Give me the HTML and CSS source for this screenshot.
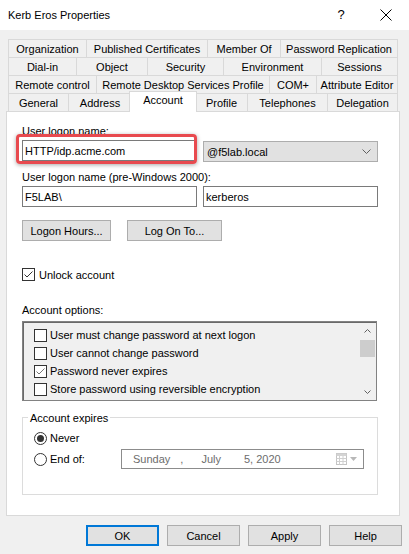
FILE: index.html
```html
<!DOCTYPE html>
<html>
<head>
<meta charset="utf-8">
<title>Kerb Eros Properties</title>
<link rel="stylesheet" href="styles.css">
</head>
<body>
<div class="window">
  <div class="titlebar">
    <span class="title">Kerb Eros Properties</span>
    <span class="help">?</span>
    <span class="close"><svg width="12" height="12" viewBox="0 0 12 12"><path d="M0.5 0.5 L11.5 11.5 M11.5 0.5 L0.5 11.5" stroke="#000" stroke-width="1" fill="none"/></svg></span>
  </div>

  <div class="tabs">
    <div class="tabrow r1">
      <div class="tab">Organization</div>
      <div class="tab">Published Certificates</div>
      <div class="tab">Member Of</div>
      <div class="tab">Password Replication</div>
    </div>
    <div class="tabrow r2">
      <div class="tab">Dial-in</div>
      <div class="tab">Object</div>
      <div class="tab">Security</div>
      <div class="tab">Environment</div>
      <div class="tab">Sessions</div>
    </div>
    <div class="tabrow r3">
      <div class="tab">Remote control</div>
      <div class="tab">Remote Desktop Services Profile</div>
      <div class="tab">COM+</div>
      <div class="tab">Attribute Editor</div>
    </div>
    <div class="tabrow r4">
      <div class="tab">General</div>
      <div class="tab">Address</div>
      <div class="tab sel">Account</div>
      <div class="tab">Profile</div>
      <div class="tab">Telephones</div>
      <div class="tab">Delegation</div>
    </div>
  </div>

  <div class="panel">
    <div class="label">User logon name:</div>
    <div class="row1">
      <div class="hl-wrap">
        <div class="input w173">HTTP/idp.acme.com</div>
        <div class="highlight"></div>
      </div>
      <div class="combo">
        <span>@f5lab.local</span>
        <svg width="9" height="5" viewBox="0 0 9 5"><polyline points="0.5,0.5 4.5,4.5 8.5,0.5" fill="none" stroke="#606060" stroke-width="1"/></svg>
      </div>
    </div>
    <div class="label label2">User logon name (pre-Windows 2000):</div>
    <div class="row2">
      <div class="input w175">F5LAB\</div>
      <div class="input w175">kerberos</div>
    </div>
    <div class="btnrow">
      <div class="btn w89">Logon Hours...</div>
      <div class="btn w95">Log On To...</div>
    </div>
    <div class="check-row unlock">
      <span class="cbox"><svg width="11" height="11" viewBox="0 0 11 11"><polyline points="1.5,5.5 4,8 9.5,2.5" fill="none" stroke="#333" stroke-width="1"/></svg></span>
      <span>Unlock account</span>
    </div>
    <div class="label label3">Account options:</div>
    <div class="listbox">
      <div class="items">
        <div class="check-row item"><span class="cbox"></span><span>User must change password at next logon</span></div>
        <div class="check-row item"><span class="cbox"></span><span>User cannot change password</span></div>
        <div class="check-row item"><span class="cbox"><svg width="11" height="11" viewBox="0 0 11 11"><polyline points="1.5,5.5 4,8 9.5,2.5" fill="none" stroke="#777" stroke-width="1"/></svg></span><span>Password never expires</span></div>
        <div class="check-row item"><span class="cbox"></span><span>Store password using reversible encryption</span></div>
      </div>
      <div class="scrollbar">
        <div class="arrow"><svg width="7" height="4" viewBox="0 0 7 4"><polyline points="0.5,3.5 3.5,0.5 6.5,3.5" fill="none" stroke="#606060" stroke-width="1"/></svg></div>
        <div class="thumb"></div>
        <div class="arrow down"><svg width="7" height="4" viewBox="0 0 7 4"><polyline points="0.5,0.5 3.5,3.5 6.5,0.5" fill="none" stroke="#606060" stroke-width="1"/></svg></div>
      </div>
    </div>

    <div class="group">
      <div class="legend">Account expires</div>
      <div class="radio-row first">
        <span class="radio on"><span class="dot"></span></span>
        <span class="rlabel">Never</span>
      </div>
      <div class="radio-row second">
        <span class="radio"></span>
        <span class="rlabel wide">End of:</span>
        <div class="datepick">
          <span class="d-day">Sunday</span>
          <span class="d-comma">,</span>
          <span class="d-month">July</span>
          <span class="d-date">5, 2020</span>
          <span class="d-icon">
            <svg width="11" height="12" viewBox="0 0 11 12"><rect x="0.5" y="0.5" width="10" height="11" fill="#fff" stroke="#c4c4c4"/><rect x="0.5" y="0.5" width="10" height="2.5" fill="#d4d4d4"/><path d="M0.5 5.5 H10.5 M0.5 8.5 H10.5 M3.5 3 V11.5 M7 3 V11.5" stroke="#d0d0d0" stroke-width="1"/></svg>
            <svg width="7" height="4" viewBox="0 0 7 4"><polygon points="0,0 7,0 3.5,4" fill="#b8b8b8"/></svg>
          </span>
        </div>
      </div>
    </div>
  </div>

  <div class="footer">
    <div class="btn w73 default">OK</div>
    <div class="btn w73">Cancel</div>
    <div class="btn w73">Apply</div>
    <div class="btn w73">Help</div>
  </div>
</div>
</body>
</html>
```

FILE: styles.css
```css
html, body {
  margin: 0;
  padding: 0;
}
body {
  width: 409px;
  height: 554px;
  overflow: hidden;
  background: #f0f0f0;
  font-family: "Liberation Sans", Arial, sans-serif;
  font-size: 11px;
  color: #000;
}
.window {
  width: 409px;
  height: 554px;
  background: #f0f0f0;
}

/* Title bar */
.titlebar {
  height: 30px;
  background: #fff;
  display: flex;
  align-items: center;
  padding-left: 8px;
  padding-right: 13px;
}
.title {
  line-height: 14px;
}
.help {
  margin-left: auto;
  width: 20px;
  text-align: center;
  font-size: 13px;
  line-height: 14px;
}
.close {
  margin-left: 25px;
  width: 20px;
  height: 12px;
  display: flex;
  justify-content: center;
}

/* Tabs */
.tabs {
  padding-top: 9px;
  margin-left: 8px;
  width: 390px;
}
.tabrow {
  display: grid;
  height: 18px;
}
.r1 { grid-template-columns: 78px 121px 73px 118px; }
.r2 { grid-template-columns: 68px 71px 76px 98px 77px; }
.r3 { grid-template-columns: 88px 173px 47px 82px; }
.r4 { grid-template-columns: 60px 63px 64px 52px 80px 71px; }
.tab {
  border-top: 1px solid #d9d9d9;
  border-left: 1px solid #d9d9d9;
  background: #f0f0f0;
  display: flex;
  align-items: center;
  justify-content: center;
  line-height: 14px;
  white-space: nowrap;
}
.tab:last-child {
  border-right: 1px solid #d9d9d9;
}
.tab.sel {
  position: relative;
  z-index: 1;
  background: #fff;
  margin: -2px -2px -1px -2px;
  border: 1px solid #d9d9d9;
  border-bottom: none;
  align-items: flex-start;
  padding-top: 1px;
}

/* Panel */
.panel {
  margin-left: 6px;
  width: 394px;
  height: 405px;
  box-sizing: border-box;
  border: 1px solid #d9d9d9;
  background: #fff;
  padding: 12px 0 0 15px;
}
.label {
  line-height: 14px;
  height: 14px;
  white-space: nowrap;
}
.label2 { margin-top: 8px; }
.label3 { margin-top: 21px; }

.row1 {
  display: flex;
  align-items: flex-start;
  margin-top: 2px;
  height: 22px;
}
.hl-wrap {
  position: relative;
  width: 173px;
  height: 21px;
}
.input {
  box-sizing: border-box;
  height: 21px;
  border: 1px solid #7a7a7a;
  background: #fff;
  padding-left: 2px;
  display: flex;
  align-items: center;
  white-space: nowrap;
}
.w173 { width: 173px; }
.w175 { width: 175px; }
.highlight {
  position: absolute;
  left: -6px;
  top: -6px;
  right: -2px;
  bottom: -3px;
  border: 3px solid #e84a4f;
  border-radius: 4px;
  box-shadow: 0 1px 4px rgba(0, 0, 0, 0.35);
  pointer-events: none;
}
.combo {
  box-sizing: border-box;
  margin-left: 8px;
  margin-top: 1px;
  width: 175px;
  height: 21px;
  border: 1px solid #adadad;
  background: #e1e1e1;
  padding: 0 6px 0 3px;
  display: flex;
  align-items: center;
  justify-content: space-between;
}

.row2 {
  display: flex;
  gap: 6px;
  margin-top: 2px;
}

.btnrow {
  display: flex;
  gap: 16px;
  margin-top: 13px;
}
.btn {
  box-sizing: border-box;
  height: 21px;
  border: 1px solid #adadad;
  background: #e1e1e1;
  display: flex;
  align-items: center;
  justify-content: center;
  white-space: nowrap;
}
.w89 { width: 89px; }
.w95 { width: 95px; }
.w73 { width: 73px; }
.btn.default {
  border: 2px solid #0078d7;
}

.check-row {
  display: flex;
  align-items: center;
  white-space: nowrap;
}
.cbox {
  box-sizing: border-box;
  width: 13px;
  height: 13px;
  border: 1px solid #333;
  background: #fff;
  display: flex;
  flex: none;
}
.unlock {
  margin-top: 26px;
  height: 15px;
  gap: 4px;
}

/* Listbox */
.listbox {
  box-sizing: border-box;
  margin-top: 4px;
  width: 355px;
  height: 80px;
  border: 1px solid #828282;
  box-shadow: inset 1px 1px 0 #696969;
  background: #f0f0f0;
  display: flex;
}
.items {
  flex: 1;
  padding: 4px 0 0 11px;
}
.item {
  height: 18px;
  gap: 3px;
}
.scrollbar {
  width: 17px;
  display: flex;
  flex-direction: column;
}
.arrow {
  height: 17px;
  display: flex;
  align-items: center;
  justify-content: center;
}
.arrow.down {
  margin-top: auto;
}
.thumb {
  margin: 1px 1px 0 1px;
  height: 17px;
  background: #cdcdcd;
}

/* Group box */
.group {
  box-sizing: border-box;
  margin-top: 16px;
  width: 356px;
  border: 1px solid #dcdcdc;
  padding: 0 0 25px 11px;
}
.legend {
  width: fit-content;
  margin: -7px 0 0 -6px;
  padding: 0 2px;
  background: #fff;
  line-height: 14px;
}
.radio-row {
  display: flex;
  align-items: center;
  white-space: nowrap;
}
.radio-row.first {
  margin-top: 4px;
  height: 18px;
}
.radio-row.second {
  margin-top: 2px;
  height: 20px;
}
.radio {
  box-sizing: border-box;
  width: 13px;
  height: 13px;
  border: 1px solid #333;
  border-radius: 50%;
  background: #fff;
  display: flex;
  align-items: center;
  justify-content: center;
  flex: none;
}
.dot {
  width: 7px;
  height: 7px;
  border-radius: 50%;
  background: #333;
}
.rlabel {
  margin-left: 3px;
  line-height: 14px;
}
.rlabel.wide {
  width: 71px;
}
.datepick {
  box-sizing: border-box;
  width: 243px;
  height: 20px;
  border: 1px solid #8c8c8c;
  background: #fff;
  color: #6d6d6d;
  display: flex;
  align-items: center;
  padding-left: 11px;
  white-space: nowrap;
}
.d-comma { margin-left: 10px; }
.d-month { margin-left: 18px; }
.d-date { margin-left: 23px; }
.d-icon {
  margin-left: auto;
  margin-right: 6px;
  display: flex;
  align-items: center;
  gap: 3px;
}

/* Footer */
.footer {
  display: flex;
  justify-content: flex-end;
  gap: 8px;
  padding: 9px 7px 0 0;
}
```
